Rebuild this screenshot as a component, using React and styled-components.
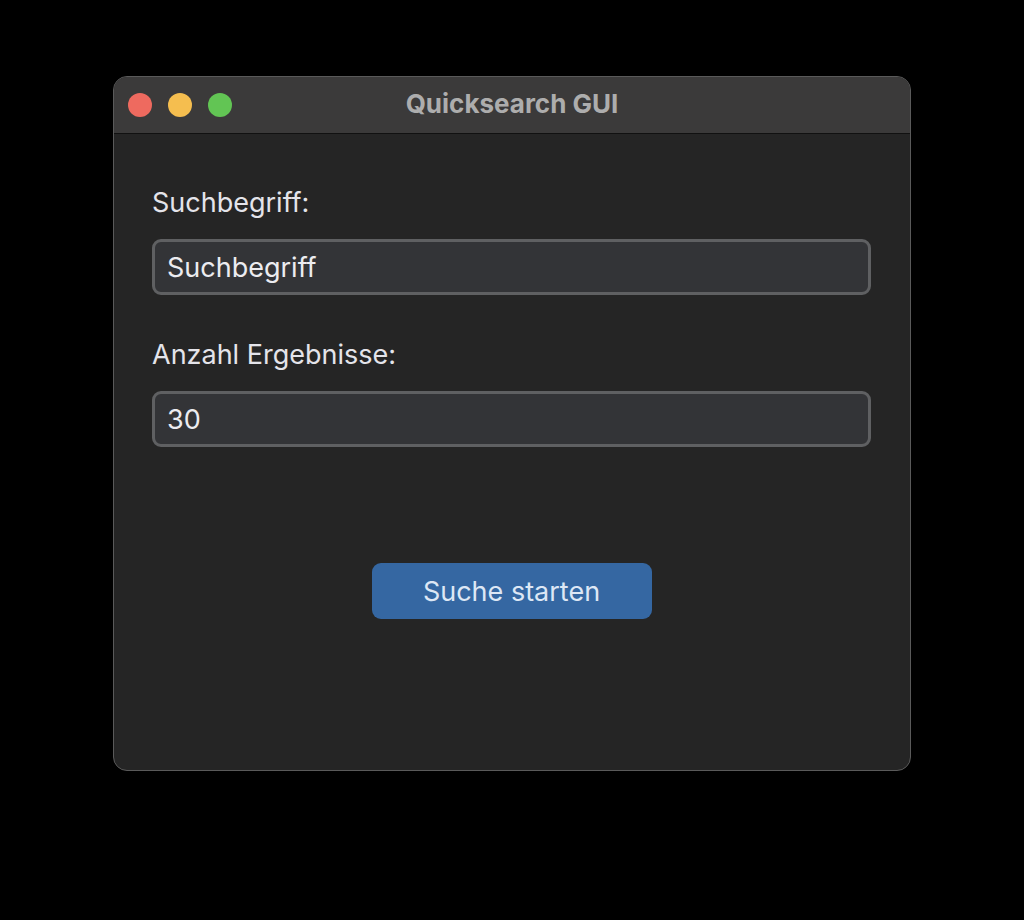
import styled, { createGlobalStyle } from "styled-components"

const GlobalStyle = createGlobalStyle`
body {
  margin: 0;
  background: #000000;
  font-family: Inter, "Noto Sans", "Liberation Sans", sans-serif;
}
`

const Screen = styled.div`
display: flex;
justify-content: center;
padding-top: 76px;
height: 920px;
box-sizing: border-box;
`

const Window = styled.div`
width: 798px;
height: 695px;
box-sizing: border-box;
border: 1px solid #5a5a5a;
border-radius: 14px;
background: #252525;
overflow: hidden;
display: flex;
flex-direction: column;
`

const TitleBar = styled.div`
height: 56px;
flex-shrink: 0;
background: #3b3a3a;
border-bottom: 1px solid #111111;
display: flex;
align-items: center;
position: relative;
padding-left: 14px;
gap: 16px;
`

const Light = styled.span`
width: 24px;
height: 24px;
border-radius: 50%;
background: ${props => props.color};
`

const Title = styled.div`
position: absolute;
left: 0;
right: 0;
top: 12px;
text-align: center;
font-size: 26px;
line-height: 30px;
font-weight: 700;
color: #adadad;
pointer-events: none;
`

const Content = styled.div`
padding: 54px 39px 0 38px;
display: flex;
flex-direction: column;
`

const Label = styled.label`
font-size: 27px;
line-height: 30px;
color: #e4e4ea;
margin-bottom: 21px;
`

const Field = styled.input`
height: 56px;
box-sizing: border-box;
border: 3px solid #5f6062;
border-radius: 9px;
background: #333437;
color: #ececf0;
font-family: inherit;
font-size: 27px;
padding: 0 12px;
margin-bottom: ${props => props.last ? "116px" : "45px"};
outline: none;
`

const Button = styled.button`
align-self: center;
width: 280px;
height: 56px;
border: none;
border-radius: 9px;
background: #3567a2;
color: #dde7f5;
font-family: inherit;
font-size: 27px;
cursor: pointer;
`

function App() {
    return <>
        <GlobalStyle />
        <Screen>
            <Window>
                <TitleBar>
                    <Light color="#ee6a5f" />
                    <Light color="#f5be4f" />
                    <Light color="#62c554" />
                    <Title>Quicksearch GUI</Title>
                </TitleBar>
                <Content>
                    <Label>Suchbegriff:</Label>
                    <Field defaultValue="Suchbegriff" />
                    <Label>Anzahl Ergebnisse:</Label>
                    <Field defaultValue="30" last />
                    <Button>Suche starten</Button>
                </Content>
            </Window>
        </Screen>
    </>
}

export default App
